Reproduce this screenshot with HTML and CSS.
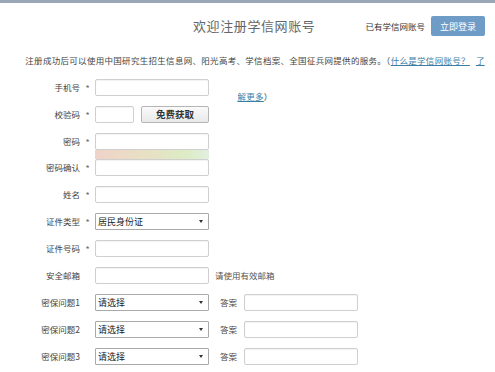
FILE: index.html
```html
<!DOCTYPE html>
<html lang="zh-CN">
<head>
    <meta charset="UTF-8">
    <meta name="viewport" content="width=device-width, initial-scale=1.0">
    <title>欢迎注册学信网账号</title>
    <link rel="stylesheet" href="styles.css">
</head>
<body>
    <div class="topbar"></div>

    <header class="header">
        <h1 class="title">欢迎注册学信网账号</h1>
        <div class="login-box">
            <span class="login-tip">已有学信网账号</span>
            <a class="login-btn" href="#">立即登录</a>
        </div>
    </header>

    <p class="intro"><span>注册成功后可以使用中国研究生招生信息网、阳光高考、学信档案、全国征兵网提供的服务。（</span><a href="#">什么是学信网账号？</a><a class="more" href="#">了</a><a href="#">解更多</a><span>）</span></p>

    <form class="reg-form">
        <div class="row">
            <label class="label">手机号</label><span class="star">*</span>
            <input class="field" type="text">
        </div>
        <div class="row">
            <label class="label">校验码</label><span class="star">*</span>
            <input class="field field-code" type="text">
            <button class="code-btn" type="button">免费获取</button>
        </div>
        <div class="row row-pwd">
            <label class="label">密码</label><span class="star">*</span>
            <div class="pwd-box">
                <input class="field" type="password">
                <div class="strength"></div>
            </div>
        </div>
        <div class="row">
            <label class="label">密码确认</label><span class="star">*</span>
            <input class="field" type="password">
        </div>
        <div class="row">
            <label class="label">姓名</label><span class="star">*</span>
            <input class="field" type="text">
        </div>
        <div class="row">
            <label class="label">证件类型</label><span class="star">*</span>
            <span class="select-wrap"><select class="select"><option>居民身份证</option></select></span>
        </div>
        <div class="row">
            <label class="label">证件号码</label><span class="star">*</span>
            <input class="field" type="text">
        </div>
        <div class="row">
            <label class="label">安全邮箱</label><span class="star"></span>
            <input class="field" type="text">
            <span class="hint">请使用有效邮箱</span>
        </div>
        <div class="row">
            <label class="label">密保问题1</label><span class="star"></span>
            <span class="select-wrap"><select class="select"><option>请选择</option></select></span>
            <span class="answer-label">答案</span>
            <input class="field" type="text">
        </div>
        <div class="row">
            <label class="label">密保问题2</label><span class="star"></span>
            <span class="select-wrap"><select class="select"><option>请选择</option></select></span>
            <span class="answer-label">答案</span>
            <input class="field" type="text">
        </div>
        <div class="row">
            <label class="label">密保问题3</label><span class="star"></span>
            <span class="select-wrap"><select class="select"><option>请选择</option></select></span>
            <span class="answer-label">答案</span>
            <input class="field" type="text">
        </div>
    </form>
</body>
</html>
```

FILE: styles.css
```css
* {
    margin: 0;
    padding: 0;
    box-sizing: border-box;
    font-family: 'Noto Sans CJK SC', 'Noto Sans', sans-serif;
}

body {
    background: #fff;
    color: #444;
    overflow: hidden;
}

.topbar {
    height: 3px;
    background: #9aa5b5;
}

/* Header */
.header {
    display: flex;
    align-items: center;
    height: 20px;
    margin-top: 13px;
    padding: 0 10px 0 193px;
}

.title {
    font-size: 13px;
    font-weight: normal;
    letter-spacing: 0.6px;
    color: #666;
    line-height: 20px;
}

.login-box {
    margin-left: auto;
    display: flex;
    align-items: center;
    gap: 6px;
}

.login-tip {
    font-size: 8.5px;
    color: #333;
}

.login-btn {
    display: flex;
    align-items: center;
    justify-content: center;
    width: 54px;
    height: 20px;
    background: #6f9cc6;
    color: #fff;
    font-size: 9px;
    text-decoration: none;
    border-radius: 2px;
}

/* Intro */
.intro {
    width: 460px;
    height: 36px;
    margin: 6px 0 1px 25px;
    font-size: 8.5px;
    letter-spacing: 0.3px;
    line-height: 36px;
    text-align: center;
    color: #444;
}

.intro a {
    color: #3a7ea6;
}

.intro .more {
    margin-left: 6px;
}

/* Form */
.reg-form {
    display: flex;
    flex-direction: column;
}

.row {
    display: flex;
    align-items: flex-start;
    margin-bottom: 10px;
}

.row-pwd {
    margin-bottom: 0;
}

.label {
    width: 80px;
    height: 17px;
    line-height: 17px;
    text-align: right;
    font-size: 8.5px;
    color: #444;
}

.star {
    width: 15px;
    height: 17px;
    line-height: 19px;
    text-align: center;
    font-size: 9px;
    color: #666;
}

.field {
    width: 114px;
    height: 17px;
    border: 1px solid #cfcfcf;
    border-radius: 2px;
    background: #fff;
    box-shadow: inset 0 1px 1px rgba(0, 0, 0, 0.05);
    outline: none;
}

.field-code {
    width: 39px;
}

.code-btn {
    margin-left: 7px;
    width: 68px;
    height: 17px;
    border: 1px solid #b5b5b5;
    border-radius: 2px;
    background: linear-gradient(#fafafa, #e9e9e9);
    font-size: 9.5px;
    font-weight: bold;
    color: #333;
    line-height: 15px;
}

.pwd-box {
    display: flex;
    flex-direction: column;
}

.strength {
    width: 114px;
    height: 9px;
    background: linear-gradient(to right, #efd3c9, #e8e0c4 45%, #dcecc4 80%, #e2efe0);
}

.select-wrap {
    position: relative;
    display: block;
    width: 114px;
    height: 17px;
}

.select {
    display: block;
    appearance: none;
    width: 100%;
    height: 17px;
    border: 1px solid #a9a9a9;
    border-radius: 1px;
    background: #fff;
    padding: 0 0 0 2px;
    font-size: 9px;
    line-height: 15px;
    color: #222;
    outline: none;
}

.select-wrap::after {
    content: '';
    position: absolute;
    right: 6px;
    top: 7px;
    border-left: 2px solid transparent;
    border-right: 2px solid transparent;
    border-top: 3px solid #333;
}

.hint {
    margin-left: 6px;
    line-height: 17px;
    font-size: 8.5px;
    color: #555;
}

.answer-label {
    margin-left: 11px;
    width: 24px;
    line-height: 17px;
    font-size: 8.5px;
    color: #444;
}
```
